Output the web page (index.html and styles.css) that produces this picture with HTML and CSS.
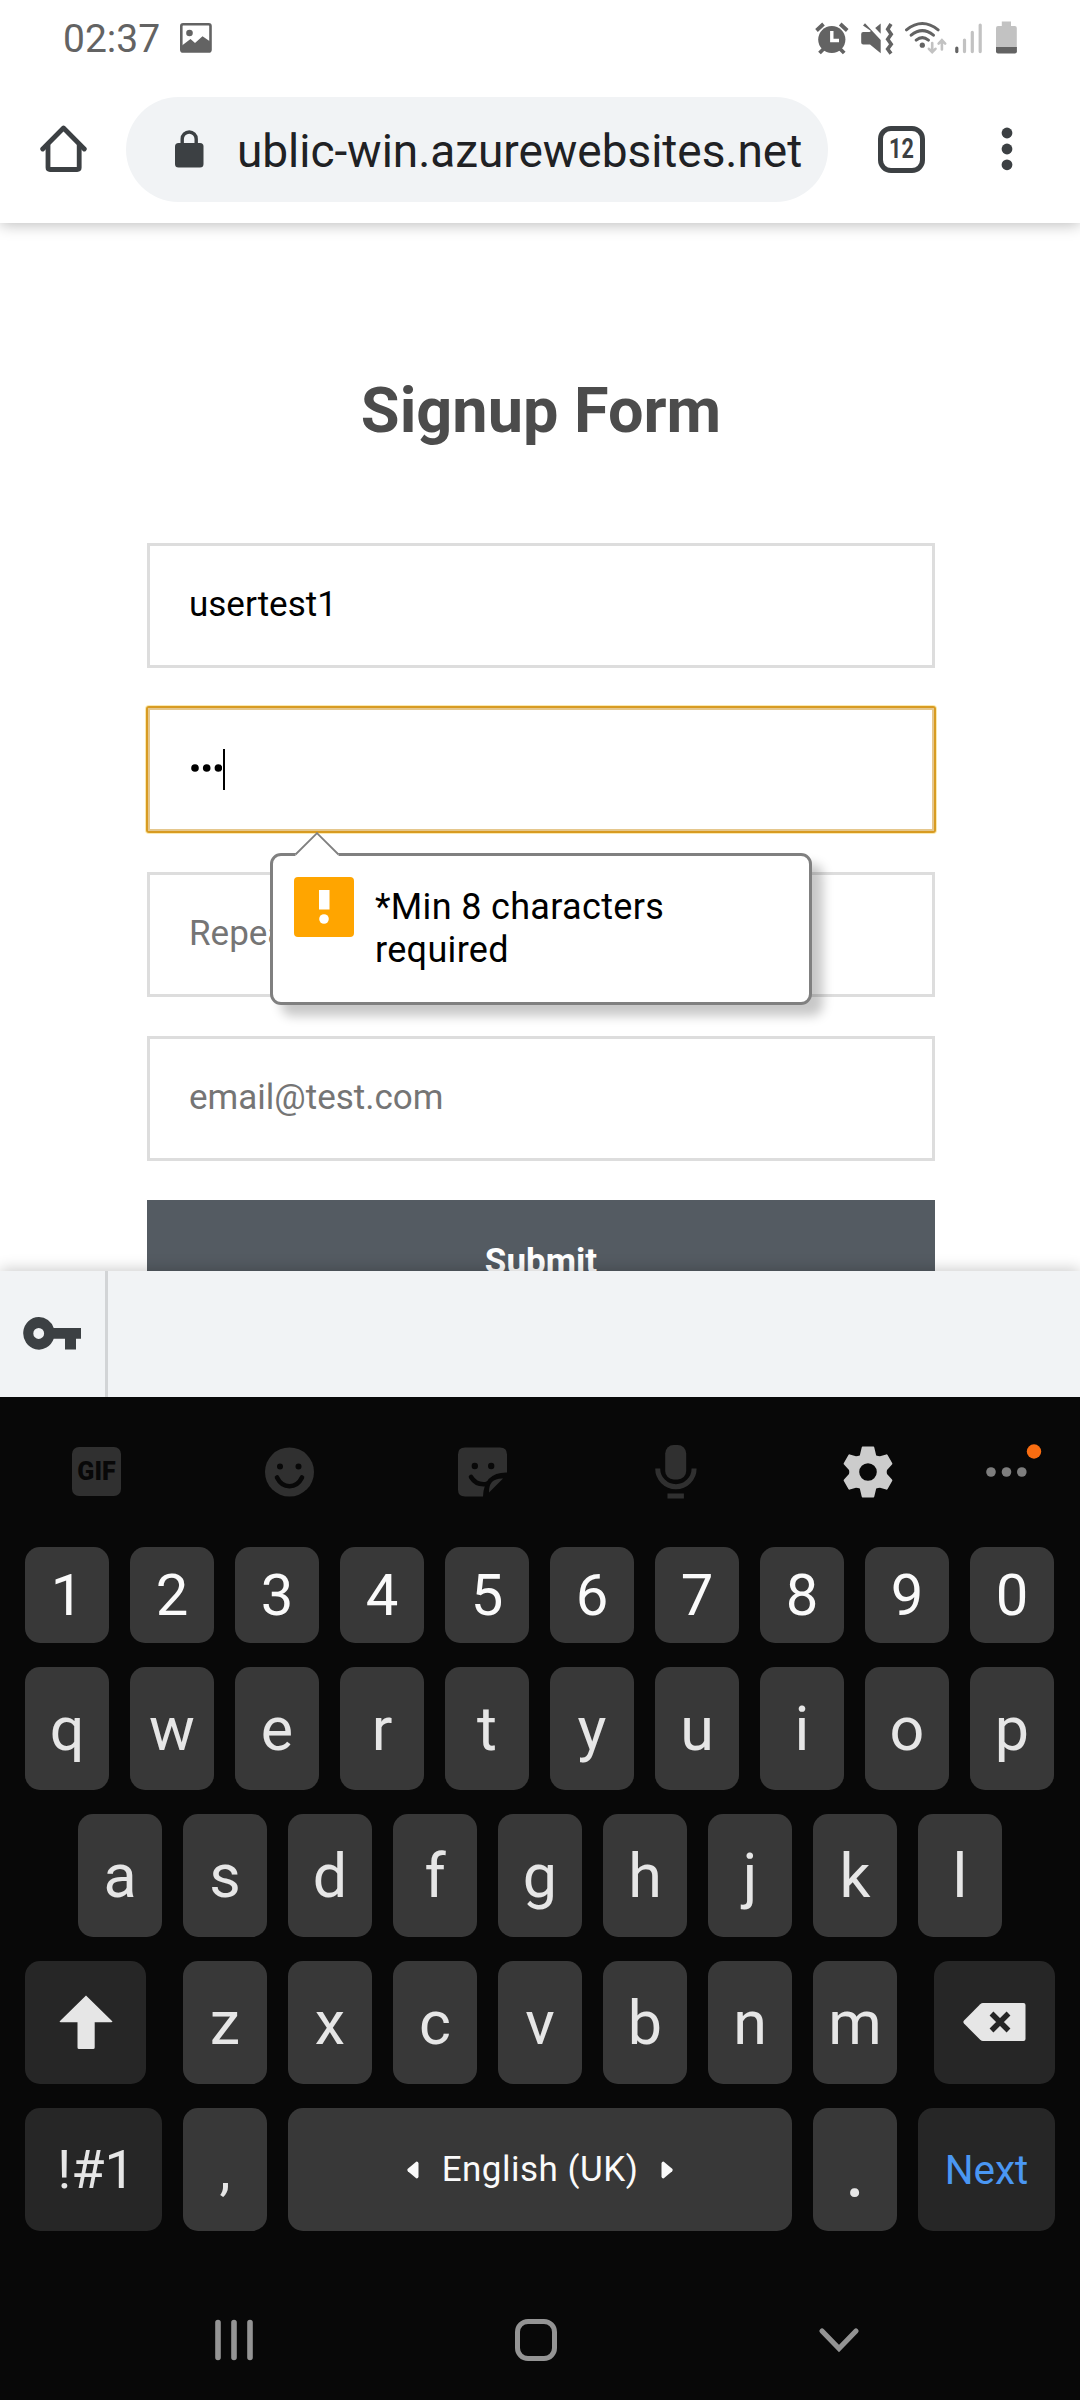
FILE: index.html
```html
<!DOCTYPE html>
<html lang="en">
<head>
<meta charset="utf-8">
<title>Signup Form</title>
<link rel="stylesheet" href="styles.css">
</head>
<body>
<div class="phone">
  <header class="statusbar">
    <span class="clock">02:37</span>
    <svg class="picture" width="32" height="30" viewBox="0 0 32 30"><rect x="1.3" y="1.3" width="29.2" height="27.2" rx="1.8" fill="none" stroke="#636363" stroke-width="2.6"/><circle cx="9.5" cy="10" r="3.3" fill="#636363"/><path d="M2 22.500L10.500 16l4.500 4 7.500-6.800 8 5.500V28.500H2z" fill="#636363"/></svg>
    <svg class="status-icons" width="204" height="36" viewBox="814 20 204 36">
      <g fill="#636363">
        <circle cx="831.8" cy="39.500" r="13.6"/>
        <path d="M816.500 30.500l7-6.500M847.200 30.500l-7-6.500M819.500 53l5-5M844.200 53l-5-5" stroke="#636363" stroke-width="3.800"/>
        <path d="M831.800 31v9.500h7.200" fill="none" stroke="#fff" stroke-width="3.400"/>
        <path d="M861.200 34q0-2 2-2h6.300l1.500-1L863 25.600l2-2.300L880.700 40v13.300L870 44.500h-6.800q-2 0-2-2z"/>
        <path d="M880.700 23.400v10.400L875.200 28z"/>
        <path d="M891 24l-3.300 5.200 3.500 5.100-3.500 5 3.500 5-3.500 4.700 3.300 4.600" fill="none" stroke="#636363" stroke-width="3.600"/>
        <circle cx="922.300" cy="45.200" r="2.600"/>
      </g>
      <g fill="none" stroke="#636363" stroke-width="3" stroke-linecap="round">
        <path d="M906.500 29.800q15.800-12.700 31.600 0M911.200 35.200q11.100-9.200 22.200 0M916.200 40.100q6.100-5 12.200 0"/>
      </g>
      <g fill="none" stroke="#c2c2c2" stroke-width="2.600" stroke-linecap="round">
        <path d="M932.200 43v9M928.900 48.800l3.300 3.400 3.300-3.400M941.900 49.500v-9M938.600 43.600l3.300-3.500 3.300 3.500"/>
      </g>
      <g fill="none" stroke="#c2c2c2" stroke-width="3.200" stroke-linecap="round">
        <path d="M956.800 48v3.600" stroke="#636363"/><path d="M964.500 40v11.600M972.300 32.300v19.300M980.200 25v26.600"/>
      </g>
      <path d="M996 28q0-2 2-2h3.800v-4.500h9.200V26h3.800q2 0 2 2v20H996z" fill="#c2c2c2"/>
      <path d="M996 47h20.900v4.600q0 2-2 2H998q-2 0-2-2z" fill="#636363"/>
    </svg>
  </header>

  <div class="browserbar">
    <svg class="home" width="48" height="48" viewBox="0 0 48 48"><g fill="none" stroke="#3c4043" stroke-width="4.800" stroke-linecap="round" stroke-linejoin="round"><path d="M2.700 24L23.500 3 44.300 24"/><path d="M8 20V42.500q0 2 2 2H37.200q2 0 2-2V20"/></g></svg>
    <div class="address">
      <svg width="29" height="38" viewBox="0 0 29 38"><rect y="13" width="28.500" height="24.500" rx="3.500" fill="#3c4043"/><path d="M7.200 14V9a7 7 0 0 1 14 0v5" fill="none" stroke="#3c4043" stroke-width="3.400"/></svg>
      <span class="url">ublic-win.azurewebsites.net</span>
    </div>
    <div class="tabs"><span>12</span></div>
    <svg class="menu" width="12" height="46" viewBox="0 0 12 46"><g fill="#3c4043"><circle cx="6" cy="7" r="5.400"/><circle cx="6" cy="23" r="5.400"/><circle cx="6" cy="38.800" r="5.400"/></g></svg>
  </div>

  <main class="page">
    <h1>Signup Form</h1>
    <div class="field"><span>usertest1</span></div>
    <div class="field focused">
      <svg class="mask" width="32" height="10" viewBox="0 0 32 10"><circle cx="5" cy="5" r="3.800"/><circle cx="16.700" cy="5" r="3.800"/><circle cx="28.400" cy="5" r="3.800"/></svg><i class="caret"></i>
      <div class="bubble">
        <svg class="pointer" width="46" height="26" viewBox="0 0 46 26"><path d="M1.500 26V22L23 1 44.500 22v4z" fill="#fff"/><path d="M1.500 22.500L23 1.200 44.500 22.500" fill="none" stroke="#808080" stroke-width="1.800"/></svg>
        <svg class="warn" width="60" height="60" viewBox="0 0 60 60"><rect width="60" height="60" rx="4" fill="#ffa500"/><rect x="25" y="13" width="10.500" height="19.500" fill="#fff"/><circle cx="30" cy="42" r="4.800" fill="#fff"/></svg>
        <p>*Min 8 characters<br>required</p>
      </div>
    </div>
    <div class="field hint"><span>Repea</span></div>
    <div class="field hint"><span>email@test.com</span></div>
    <div class="submit">Submit</div>
  </main>

  <div class="autofill">
    <div class="keybox"><svg width="58" height="33" viewBox="0 0 58 33"><path fill-rule="evenodd" d="M15.700 0A15.700 16.300 0 1 0 30.700 21.800H42V32.600H53V21.800H58V11H30.700A15.700 16.300 0 0 0 15.700 0zM15.700 10.900a5.400 5.500 0 1 1 0 11 5.400 5.500 0 0 1 0-11z" fill="#3c4043"/></svg></div>
  </div>

  <div class="keyboard">
    <div class="tools">
      <div class="gif"><span>GIF</span></div>
      <svg width="49" height="50" viewBox="0 0 49 50"><circle cx="24.500" cy="25" r="24.500" fill="#303030"/><g fill="#080808"><circle cx="15" cy="19.500" r="3"/><circle cx="33.500" cy="19.500" r="3"/></g><path d="M12 30.500q4.300 8.700 12.500 8.700T37 30.500" fill="none" stroke="#080808" stroke-width="4.600" stroke-linecap="round"/></svg>
      <svg width="49" height="50" viewBox="0 0 49 50"><path d="M7 .500H42q7 0 7 7V25.500Q26 25 25 49.500H7q-7 0-7-7V7.500q0-7 7-7z" fill="#303030"/><g fill="#080808"><circle cx="16.800" cy="19" r="3.200"/><circle cx="33.200" cy="19" r="3.200"/></g><path d="M13 30q4.500 7.300 12.500 7.300 2.500 0 4-.800" fill="none" stroke="#080808" stroke-width="4.600" stroke-linecap="round"/><path d="M31 45.500q-.600-14.500 14-14z" fill="#303030"/></svg>
      <svg width="42" height="54" viewBox="0 0 42 54"><rect x="10.200" width="21" height="34.500" rx="8.500" fill="#303030"/><path d="M2.700 23.500a18.200 18.200 0 0 0 36.400 0" fill="none" stroke="#303030" stroke-width="5"/><path d="M12.500 48.500h16.400v5H12.500z" fill="#303030"/></svg>
      <svg width="50" height="52" viewBox="0 0 50 52"><path fill-rule="evenodd" fill="#ccc" d="M19.500 .5H30.500Q31 .5 31.300 1.500L33.200 9.500Q35 10.200 37 10.300L43.200 8.400Q44.100 8.200 44.600 9L49.300 17.200Q49.600 18 49 18.600L44 24Q43.400 26 44 28L49 33.400Q49.600 34 49.300 34.800L44.600 43Q44.100 43.800 43.200 43.600L37 41.700Q35 41.800 33.200 42.500L31.300 50.500Q31 51.500 30.500 51.500H19.500Q19 51.500 18.700 50.500L16.800 42.500Q15 41.800 13 41.700L6.800 43.600Q5.900 43.800 5.400 43L.7 34.800Q.4 34 1 33.400L6 28Q6.600 26 6 24L1 18.600Q.4 18 .7 17.200L5.400 9Q5.900 8.200 6.800 8.400L13 10.300Q15 10.200 16.800 9.500L18.700 1.500Q19 .5 19.500 .5zM25 17.200a8.800 8.800 0 1 0 0 17.600 8.800 8.800 0 0 0 0-17.600z"/></svg>
      <svg width="56" height="56" viewBox="0 0 56 56"><g fill="#7e7e7e"><circle cx="5" cy="28" r="4.800"/><circle cx="20.500" cy="28" r="4.800"/><circle cx="35.800" cy="28" r="4.800"/></g><circle cx="48" cy="7.500" r="7.200" fill="#f96d11"/></svg>
    </div>
    <div class="row digits"><b>1</b><b>2</b><b>3</b><b>4</b><b>5</b><b>6</b><b>7</b><b>8</b><b>9</b><b>0</b></div>
    <div class="row"><b>q</b><b>w</b><b>e</b><b>r</b><b>t</b><b>y</b><b>u</b><b>i</b><b>o</b><b>p</b></div>
    <div class="row home-row"><b>a</b><b>s</b><b>d</b><b>f</b><b>g</b><b>h</b><b>j</b><b>k</b><b>l</b></div>
    <div class="row">
      <b class="dark shift"><svg width="54" height="55" viewBox="0 0 54 55"><path d="M27 .500L53.500 26.500Q53 27.500 52 27.300H35.700V52.500q0 1.500-1.500 1.500H20q-1.500 0-1.500-1.500V27.300H2Q1 27.500.500 26.500z" fill="#e6e6e6"/></svg></b>
      <b>z</b><b>x</b><b>c</b><b>v</b><b>b</b><b>n</b><b>m</b>
      <b class="dark erase"><svg width="63" height="38" viewBox="0 0 63 38"><path d="M20 0H60.500q2 0 2 2V36q0 2-2 2H20q-1.500 0-2.800-1.200L1 20.500Q-.300 19 1 17.500L17.200 1.200Q18.500 0 20 0z" fill="#e6e6e6"/><path d="M28.500 10.500l17 17M45.500 10.500l-17 17" stroke="#262626" stroke-width="5.400"/></svg></b>
    </div>
    <div class="row">
      <b class="dark sym">!#1</b><b class="comma">,</b>
      <b class="space"><svg width="12" height="18" viewBox="0 0 12 18"><path d="M9.500 .500q2 0 2 2V15.500q0 2-2 2L.800 10.200Q-.200 9 .800 7.800z" fill="#fafafa"/></svg><span>English (UK)</span><svg width="12" height="18" viewBox="0 0 12 18"><path d="M2.500 .500q-2 0-2 2V15.500q0 2 2 2L11.200 10.200Q12.200 9 11.200 7.800z" fill="#fafafa"/></svg></b>
      <b class="dot"><span>.</span></b><b class="dark next">Next</b>
    </div>
  </div>

  <nav class="navbar">
    <svg width="40" height="42" viewBox="0 0 40 42"><path d="M4 3.500v35M20 3.500v35M36 3.500v35" stroke="#949494" stroke-width="5.600" stroke-linecap="round"/></svg>
    <svg width="42" height="42" viewBox="0 0 42 42"><rect x="2.500" y="2.500" width="37" height="37" rx="10.500" fill="none" stroke="#949494" stroke-width="5"/></svg>
    <svg width="42" height="26" viewBox="0 0 42 26"><path d="M4 4l17 17.500L38 4" fill="none" stroke="#949494" stroke-width="5.200" stroke-linecap="round"/></svg>
  </nav>
</div>
</body>
</html>
```
FILE: styles.css
```css
* { box-sizing: border-box; }
body { margin: 0; background: #fff; font-family: Roboto, "Liberation Sans", sans-serif; }
svg { display: block; flex: none; }
.phone { width: 1080px; height: 2400px; display: flex; flex-direction: column; overflow: hidden; }

.statusbar { height: 80px; flex: none; display: flex; align-items: flex-start; padding: 0 62px 0 63px; color: #636363; }
.clock { font-size: 39px; line-height: 46px; padding-top: 16px; width: 117px; }
.picture { margin-top: 23px; }
.status-icons { margin: 20px 0 0 auto; }

.browserbar { height: 143px; flex: none; display: flex; align-items: center; padding: 0 67px 5px 40px; position: relative; z-index: 2; background: #fff; box-shadow: 0 2px 14px rgba(0,0,0,.26); clip-path: inset(0 0 -24px 0); }
.address { margin-left: 38px; width: 702px; height: 105px; border-radius: 53px; background: #f1f3f5; display: flex; align-items: center; padding-left: 49px; }
.url { margin-left: 33px; padding-top: 4px; font-size: 46px; line-height: 54px; letter-spacing: -.04px; color: #202124; white-space: nowrap; }
.tabs { margin-left: 50px; width: 47px; height: 47px; border: 5px solid #3c4043; border-radius: 13px; display: flex; align-items: center; justify-content: center; color: #3c4043; font-size: 27px; line-height: 30px; font-weight: 700; }
.tabs span { transform: scaleX(.8); }
.menu { margin-left: auto; }

.page { height: 1048px; flex: none; padding: 168px 145px 0 147px; display: flex; flex-direction: column; gap: 39.300px; overflow: hidden; }
h1 { margin: 0 0 72.700px; text-align: center; font-size: 63px; line-height: 80px; height: 40px; font-weight: 700; color: #4c4c4c; display: flex; align-items: center; justify-content: center; }
.field { height: 125px; flex: none; border: 3px solid #ddd; padding: 0 0 1px 39px; display: flex; align-items: center; font-size: 35px; color: #000; position: relative; background: #fff; }
.hint { color: #757575; }
.focused { border-color: #e5c78d; box-shadow: 0 0 0 1px #d89b22, 0 0 0 2px #fbe9b0; z-index: 1; border-radius: 2px; }
.focused::after { content: ""; position: absolute; inset: -3px; border: 1px solid #d89b22; pointer-events: none; }
.mask { margin: -2px 0 0 1px; }
.caret { width: 2px; height: 41px; background: #000; margin-left: 1px; }

.bubble { position: absolute; left: 120px; top: 143px; width: 542px; height: 152px; border: 3px solid #808080; border-radius: 11px; background: #fff; box-shadow: 11px 11px 11px rgba(0,0,0,.22); display: flex; padding: 21px 0 0 21px; }
.pointer { position: absolute; left: 21px; top: -24px; }
.bubble p { margin: 9px 0 0 21px; font-size: 36px; line-height: 43px; letter-spacing: .33px; color: #000; white-space: nowrap; }
.submit { height: 125px; flex: none; background: #545b62; color: #fff; font-size: 35px; font-weight: 700; display: flex; align-items: center; justify-content: center; padding-bottom: 3px; }

.autofill { height: 126px; flex: none; background: #f1f3f5; display: flex; position: relative; z-index: 2; box-shadow: 0 -2px 14px rgba(0,0,0,.2); clip-path: inset(-24px 0 0 0); }
.keybox { width: 108px; border-right: 3px solid #d2d4d6; display: flex; align-items: center; justify-content: center; padding: 0 1px 1px 0; }

.keyboard { height: 858px; flex: none; background: #080808; padding: 0 25px; display: flex; flex-direction: column; gap: 24px; position: relative; z-index: 3; }
.tools { height: 126px; display: flex; align-items: center; padding: 23px 0 0 47px; }
.tools > :nth-child(2), .tools > :nth-child(3) { margin-left: 144px; }
.tools > :nth-child(4) { margin-left: 148px; }
.tools > :nth-child(5) { margin-left: 146px; }
.tools > :nth-child(6) { margin-left: 92.500px; }
.gif { width: 49px; height: 49px; border-radius: 7px; background: #303030; color: #080808; display: flex; align-items: center; justify-content: center; font-size: 25px; font-weight: 900; }
.row { height: 123px; flex: none; display: flex; gap: 21px; }
.digits { height: 96px; }
.row b { width: 84px; flex: none; border-radius: 15px; background: #383838; color: #e6e6e6; font-weight: 400; font-size: 61px; display: flex; align-items: center; justify-content: center; }
.digits b { font-size: 58px; color: #fafafa; }
.home-row { padding-left: 53px; }
.row .dark { background: #262626; }
.row .shift { width: 121px; margin-right: 16px; padding-bottom: 1px; }
.row .erase { width: 121px; margin-left: 16px; padding-bottom: 1px; }
.row .sym { width: 137px; font-size: 54px; padding-left: 5px; }
.row .comma { font-size: 56px; }
.row .space { width: 504px; font-size: 35px; letter-spacing: .5px; gap: 22.500px; color: #fafafa; }
.row .dot { font-size: 80px; }
.row .next { width: 137px; font-size: 40.500px; color: #4a97f3; }

.navbar { height: 145px; flex: none; background: #080808; display: flex; align-items: center; padding: 24px 0 0 214px; gap: 261px; position: relative; z-index: 3; }
```
